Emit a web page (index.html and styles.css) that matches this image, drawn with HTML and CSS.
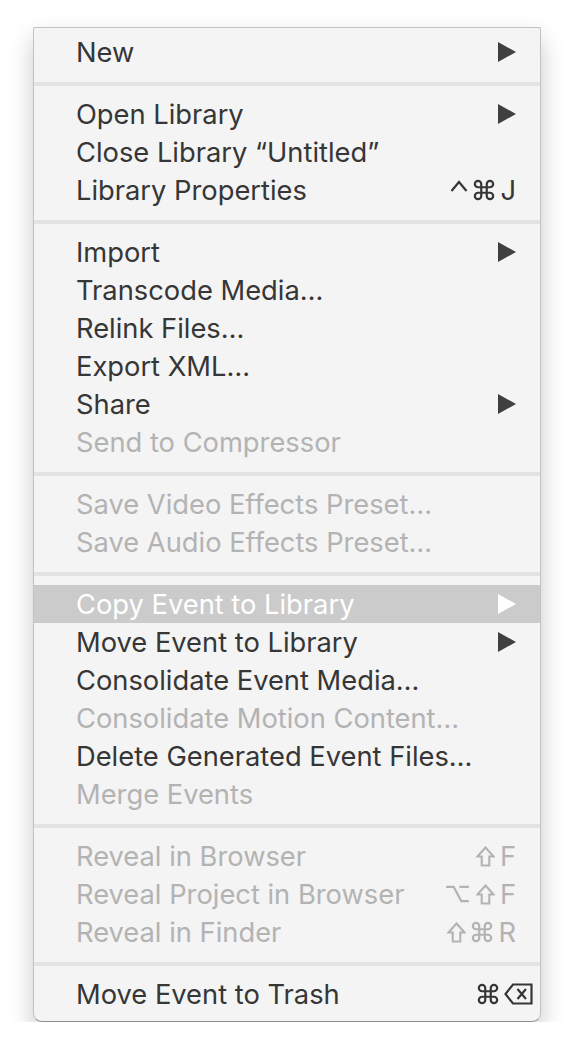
FILE: index.html
```html
<!DOCTYPE html>
<html lang="en">
<head>
    <meta charset="UTF-8">
    <meta name="viewport" content="width=device-width, initial-scale=1.0">
    <title>Event Menu</title>
    <link rel="stylesheet" href="styles.css">
</head>
<body>
<div class="menu">
    <ul>
        <li class="item"><span class="label">New</span><span class="key"><svg class="arrow" viewBox="0 0 18 20"><path d="M0 0 L18 10 L0 20 Z"/></svg></span></li>
        <li class="sep"></li>
        <li class="item"><span class="label">Open Library</span><span class="key"><svg class="arrow" viewBox="0 0 18 20"><path d="M0 0 L18 10 L0 20 Z"/></svg></span></li>
        <li class="item"><span class="label">Close Library “Untitled”</span></li>
        <li class="item">
            <span class="label">Library Properties</span>
            <span class="key">
                <svg class="sym ctrl" viewBox="0 0 18 12"><path d="M1.5 11 L9 2 L16.5 11"/></svg>
                <svg class="sym cmd" viewBox="0 0 24 24"><path d="M9 15 V5.5 a3.5 3.5 0 1 0 -3.5 3.5 H18.5 a3.5 3.5 0 1 0 -3.5 -3.5 V18.5 a3.5 3.5 0 1 0 3.5 -3.5 H5.5 a3.5 3.5 0 1 0 3.5 3.5 Z"/></svg>
                <span class="letter">J</span>
            </span>
        </li>
        <li class="sep"></li>
        <li class="item"><span class="label">Import</span><span class="key"><svg class="arrow" viewBox="0 0 18 20"><path d="M0 0 L18 10 L0 20 Z"/></svg></span></li>
        <li class="item"><span class="label">Transcode Media…</span></li>
        <li class="item"><span class="label">Relink Files…</span></li>
        <li class="item"><span class="label">Export XML…</span></li>
        <li class="item"><span class="label">Share</span><span class="key"><svg class="arrow" viewBox="0 0 18 20"><path d="M0 0 L18 10 L0 20 Z"/></svg></span></li>
        <li class="item disabled"><span class="label">Send to Compressor</span></li>
        <li class="sep"></li>
        <li class="item disabled"><span class="label">Save Video Effects Preset…</span></li>
        <li class="item disabled"><span class="label">Save Audio Effects Preset…</span></li>
        <li class="sep"></li>
        <li class="item active"><span class="label">Copy Event to Library</span><span class="key"><svg class="arrow" viewBox="0 0 18 20"><path d="M0 0 L18 10 L0 20 Z"/></svg></span></li>
        <li class="item"><span class="label">Move Event to Library</span><span class="key"><svg class="arrow" viewBox="0 0 18 20"><path d="M0 0 L18 10 L0 20 Z"/></svg></span></li>
        <li class="item"><span class="label">Consolidate Event Media…</span></li>
        <li class="item disabled"><span class="label">Consolidate Motion Content…</span></li>
        <li class="item"><span class="label">Delete Generated Event Files…</span></li>
        <li class="item disabled"><span class="label">Merge Events</span></li>
        <li class="sep"></li>
        <li class="item disabled">
            <span class="label">Reveal in Browser</span>
            <span class="key">
                <svg class="sym shift" viewBox="0 0 20 22"><path d="M10 1.5 L18.5 11 H14 V20.5 H6 V11 H1.5 Z"/></svg>
                <span class="letter">F</span>
            </span>
        </li>
        <li class="item disabled">
            <span class="label">Reveal Project in Browser</span>
            <span class="key">
                <svg class="sym opt" viewBox="0 0 24 19"><path d="M0 2 H8 L16 17 H24 M14 2 H24"/></svg>
                <svg class="sym shift" viewBox="0 0 20 22"><path d="M10 1.5 L18.5 11 H14 V20.5 H6 V11 H1.5 Z"/></svg>
                <span class="letter">F</span>
            </span>
        </li>
        <li class="item disabled">
            <span class="label">Reveal in Finder</span>
            <span class="key">
                <svg class="sym shift" viewBox="0 0 20 22"><path d="M10 1.5 L18.5 11 H14 V20.5 H6 V11 H1.5 Z"/></svg>
                <svg class="sym cmd" viewBox="0 0 24 24"><path d="M9 15 V5.5 a3.5 3.5 0 1 0 -3.5 3.5 H18.5 a3.5 3.5 0 1 0 -3.5 -3.5 V18.5 a3.5 3.5 0 1 0 3.5 -3.5 H5.5 a3.5 3.5 0 1 0 3.5 3.5 Z"/></svg>
                <span class="letter">R</span>
            </span>
        </li>
        <li class="sep"></li>
        <li class="item">
            <span class="label">Move Event to Trash</span>
            <span class="key wide">
                <svg class="sym cmd" viewBox="0 0 24 24"><path d="M9 15 V5.5 a3.5 3.5 0 1 0 -3.5 3.5 H18.5 a3.5 3.5 0 1 0 -3.5 -3.5 V18.5 a3.5 3.5 0 1 0 3.5 -3.5 H5.5 a3.5 3.5 0 1 0 3.5 3.5 Z"/></svg>
                <svg class="sym del" viewBox="0 0 29 22"><path d="M9 1.5 H27.5 V20.5 H9 L1.5 11 Z M13.5 6 L22 16 M22 6 L13.5 16"/></svg>
            </span>
        </li>
    </ul>
</div>
</body>
</html>
```

FILE: styles.css
```css
body {
    margin: 0;
    background: #ffffff;
    font-family: Inter, "Noto Sans", sans-serif;
}
.menu {
    width: 506px;
    margin: 27px 0 0 33px;
    background: #f4f4f4;
    border: 1px solid #c2c2c2;
    border-bottom-color: #8c8c8c;
    border-radius: 2px 2px 9px 9px;
    box-shadow: 0 12px 24px rgba(0, 0, 0, 0.22);
}
.menu ul {
    list-style: none;
    margin: 0;
    padding: 5px 0 8px 0;
}
.item {
    display: flex;
    align-items: center;
    height: 38px;
    padding: 0 24px 0 42px;
    font-size: 27.3px;
    color: #363636;
}
.item .label {
    flex: 1;
    white-space: nowrap;
}
.key {
    display: flex;
    align-items: center;
    gap: 5px;
}
.key.wide {
    margin-right: -17px;
}
.arrow {
    display: block;
    width: 18px;
    height: 20px;
    fill: #404040;
}
.sym {
    display: block;
    fill: none;
    stroke: currentColor;
    stroke-width: 2.2;
}
.sym.ctrl {
    width: 18px;
    height: 12px;
    margin-top: -8px;
}
.sym.cmd {
    width: 22px;
    height: 22px;
    stroke-width: 2.4;
}
.sym.shift {
    width: 19px;
    height: 21px;
}
.sym.opt {
    width: 23px;
    height: 18px;
    margin-right: 2px;
}
.sym.del {
    width: 29px;
    height: 22px;
}
.disabled {
    color: #b3b3b3;
}
.active {
    background: #cbcbcb;
    color: #ffffff;
}
.active .arrow {
    fill: #ffffff;
}
.sep {
    height: 4px;
    margin: 11px 0 9px 0;
    background: #e3e3e3;
}
```
